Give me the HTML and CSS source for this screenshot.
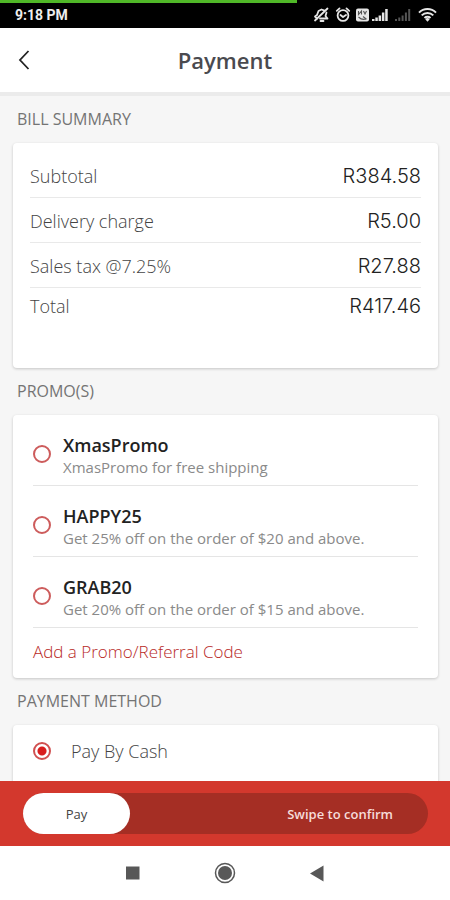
FILE: index.html
```html
<!DOCTYPE html>
<html lang="en">
<head>
<meta charset="utf-8">
<meta name="viewport" content="width=device-width, initial-scale=1">
<title>Payment</title>
<link rel="stylesheet" href="styles.css">
</head>
<body>
<div class="app">
  <div class="status">
    <div class="status-progress"></div>
    <span class="status-time">9:18 PM</span>
    <svg class="status-icons" width="126" height="18" viewBox="0 0 126 18" aria-hidden="true">
      <g fill="none" stroke="#e6e6e6" stroke-width="1.8" stroke-linecap="round" stroke-linejoin="round">
        <path d="M5 12.500L3 10.500l2-1.500 1.500-4 3-1.500 3 1.200M14.500 6.500l-1 3.500 2 2.500H8M8.500 15h3"/>
        <path d="M15.500 2.500L3 14.500" stroke-width="1.800"/>
        <circle cx="31" cy="9.500" r="5.400"/>
        <path d="M28.500 9l2.500 2 3-2M24.800 4.800l2.700-2.400M37.200 4.800l-2.700-2.400"/>
      </g>
      <rect x="44" y="2.500" width="13" height="13" rx="2" fill="#e6e6e6"/>
      <path d="M46.500 5v3.500l3-3.500v3.500M51.500 5l1.500 3 1.500-3M46.500 11c2 2 4 3 7.500 2M51 10.500l3.500 2.800" fill="none" stroke="#555" stroke-width="1.100"/>
      <g fill="#e6e6e6">
        <path d="M60 13h2.500v2H60zM63.300 11.500h2.500V15h-2.500zM66.600 9.500h2.500V15h-2.500zM69.900 6.500h2.500V15h-2.500zM73.200 3h2.500v12h-2.500z"/>
      </g>
      <g fill="#555">
        <path d="M83 13h2v2h-2zM86.300 11.500h2V15h-2zM89.600 9.500h2V15h-2zM92.900 6.500h2V15h-2zM96.200 3h2v12h-2z"/>
      </g>
      <g fill="none" stroke="#e6e6e6" stroke-width="2">
        <path d="M107 6.600a12 12 0 0 1 17 0M109.700 9.400a8.200 8.200 0 0 1 11.600 0M112.500 12a4.400 4.400 0 0 1 6 0"/>
      </g>
      <path d="M113.300 13.200a3 3 0 0 1 4.400 0l-2.200 2.600z" fill="#e6e6e6"/>
    </svg>
  </div>

  <header class="header">
    <button class="back" type="button" aria-label="Back">
      <svg width="12" height="20" viewBox="0 0 12 20" aria-hidden="true"><path d="M10.500 1L2 10l8.500 9" fill="none" stroke="#222" stroke-width="1.800"/></svg>
    </button>
    <h1 class="title">Payment</h1>
  </header>

  <main class="content">
    <h2 class="section-title">BILL SUMMARY</h2>
    <dl class="card bill">
      <div class="bill-row"><dt>Subtotal</dt><dd>R384.58</dd></div>
      <div class="bill-row"><dt>Delivery charge</dt><dd>R5.00</dd></div>
      <div class="bill-row"><dt>Sales tax @7.25%</dt><dd>R27.88</dd></div>
      <div class="bill-row bill-total"><dt>Total</dt><dd>R417.46</dd></div>
    </dl>

    <h2 class="section-title">PROMO(S)</h2>
    <div class="card promos">
      <label class="promo">
        <input class="radio" type="radio" name="promo">
        <span class="promo-text"><span class="promo-name">XmasPromo</span><span class="promo-note">XmasPromo for free shipping</span></span>
      </label>
      <label class="promo">
        <input class="radio" type="radio" name="promo">
        <span class="promo-text"><span class="promo-name">HAPPY25</span><span class="promo-note">Get 25% off on the order of $20 and above.</span></span>
      </label>
      <label class="promo">
        <input class="radio" type="radio" name="promo">
        <span class="promo-text"><span class="promo-name">GRAB20</span><span class="promo-note">Get 20% off on the order of $15 and above.</span></span>
      </label>
      <a class="add-code" href="#">Add a Promo/Referral Code</a>
    </div>

    <h2 class="section-title">PAYMENT METHOD</h2>
    <div class="card methods">
      <label class="method">
        <input class="radio" type="radio" name="method" checked>
        <span>Pay By Cash</span>
      </label>
    </div>
  </main>

  <footer class="confirm">
    <div class="track">
      <button class="pay" type="button">Pay</button>
      <span class="hint">Swipe to confirm</span>
    </div>
  </footer>

  <nav class="system-nav">
    <button class="nav-button" type="button" aria-label="Recent apps"><svg width="24" height="24" viewBox="0 0 24 24"><path d="M5 5.500h13.500v13H5z" fill="#585858"/></svg></button>
    <button class="nav-button" type="button" aria-label="Home"><svg width="24" height="24" viewBox="0 0 24 24"><circle cx="12" cy="12" r="9.500" fill="none" stroke="#585858" stroke-width="1.500"/><circle cx="12" cy="12" r="7" fill="#585858"/></svg></button>
    <button class="nav-button" type="button" aria-label="Back"><svg width="24" height="24" viewBox="0 0 24 24"><path d="M5 12.500l13.500-8v16z" fill="#585858"/></svg></button>
  </nav>
</div>
</body>
</html>
```
FILE: styles.css
```css
* {
  box-sizing: border-box;
}

body {
  margin: 0;
  font-family: "Open Sans", "Noto Sans", sans-serif;
  color: #444;
  background: #f6f6f6;
}

button {
  padding: 0;
  border: 0;
  background: none;
  font: inherit;
  color: inherit;
}

svg {
  display: block;
}

.app {
  display: flex;
  flex-direction: column;
  height: 100vh;
}

.status {
  position: relative;
  flex: none;
  display: flex;
  align-items: center;
  justify-content: space-between;
  height: 28px;
  padding: 2px 12px 0 15px;
  background: #000;
}

.status-progress {
  position: absolute;
  top: 0;
  left: 0;
  width: 66%;
  height: 3px;
  background: #50b828;
}

.status-time {
  font: 700 14px/20px Roboto, sans-serif;
  color: #eee;
}

.header {
  flex: none;
  display: grid;
  grid-template-columns: 48px 1fr 48px;
  align-items: center;
  height: 68px;
  border-bottom: 4px solid #ebebeb;
  background: #fff;
}

.back {
  display: flex;
  align-items: center;
  justify-content: center;
  height: 48px;
}

.title {
  margin: 0;
  font-size: 22px;
  line-height: 32px;
  font-weight: 600;
  text-align: center;
  color: #4a4a4f;
}

.content {
  flex: 1;
  min-height: 0;
  overflow: hidden;
  padding: 0 12px 0 13px;
}

.section-title {
  margin: 0;
  padding: 12px 4px 13px;
  font-size: 16px;
  line-height: 22px;
  font-weight: 400;
  color: #747474;
}

.card {
  margin: 0;
  border-radius: 4px;
  background: #fff;
  box-shadow: 0 1px 3px rgba(0, 0, 0, 0.2);
}

.bill {
  padding: 10px 17px 44px;
}

.bill-row {
  display: flex;
  align-items: center;
  justify-content: space-between;
  height: 45px;
  padding-top: 2px;
  border-bottom: 1px solid #e9e9e9;
}

.bill-total {
  height: 36px;
  padding: 0;
  border: 0;
}

.bill dt {
  font-size: 18px;
  font-weight: 300;
}

.bill dd {
  margin: 0;
  font: 300 20px/24px Inter, sans-serif;
  color: #222;
}

.promos {
  padding: 0 20px 14px;
}

.promo {
  display: flex;
  align-items: flex-end;
  gap: 12px;
  height: 71px;
  padding-bottom: 8px;
  border-bottom: 1px solid #e5e5e5;
}

.radio {
  flex: none;
  appearance: none;
  width: 18px;
  height: 18px;
  margin: 0;
  border: 2px solid #cd5c5c;
  border-radius: 50%;
  background: #fff;
}

.radio:checked {
  border-color: #d05050;
  background: radial-gradient(circle, #d81e1e 4px, #fff 5px);
}

.promo .radio {
  margin-bottom: 14px;
}

.promo-text {
  display: flex;
  flex-direction: column;
}

.promo-name {
  font-size: 18px;
  line-height: 23px;
  font-weight: 600;
  color: #222;
}

.promo-note {
  font-size: 15px;
  line-height: 20px;
  color: #8a8a8a;
}

.add-code {
  display: block;
  padding-top: 12px;
  font-size: 17px;
  line-height: 24px;
  font-weight: 300;
  text-decoration: none;
  color: #b8291f;
}

.methods {
  padding: 0 20px 20px;
}

.method {
  display: flex;
  align-items: center;
  gap: 20px;
  height: 52px;
  font-size: 18px;
  font-weight: 300;
}

.confirm {
  flex: none;
  padding: 12px 22px 12px 23px;
  background: #d3382d;
}

.track {
  display: flex;
  align-items: center;
  justify-content: space-between;
  height: 41px;
  padding-right: 35px;
  border-radius: 21px;
  background: #a52e24;
}

.pay {
  width: 107px;
  height: 41px;
  border-radius: 21px;
  background: #fff;
  font-size: 13px;
}

.hint {
  font-size: 13px;
  font-weight: 600;
  color: #f6dcda;
}

.system-nav {
  flex: none;
  display: flex;
  align-items: center;
  justify-content: center;
  gap: 68px;
  height: 54px;
  background: #fff;
}
```
